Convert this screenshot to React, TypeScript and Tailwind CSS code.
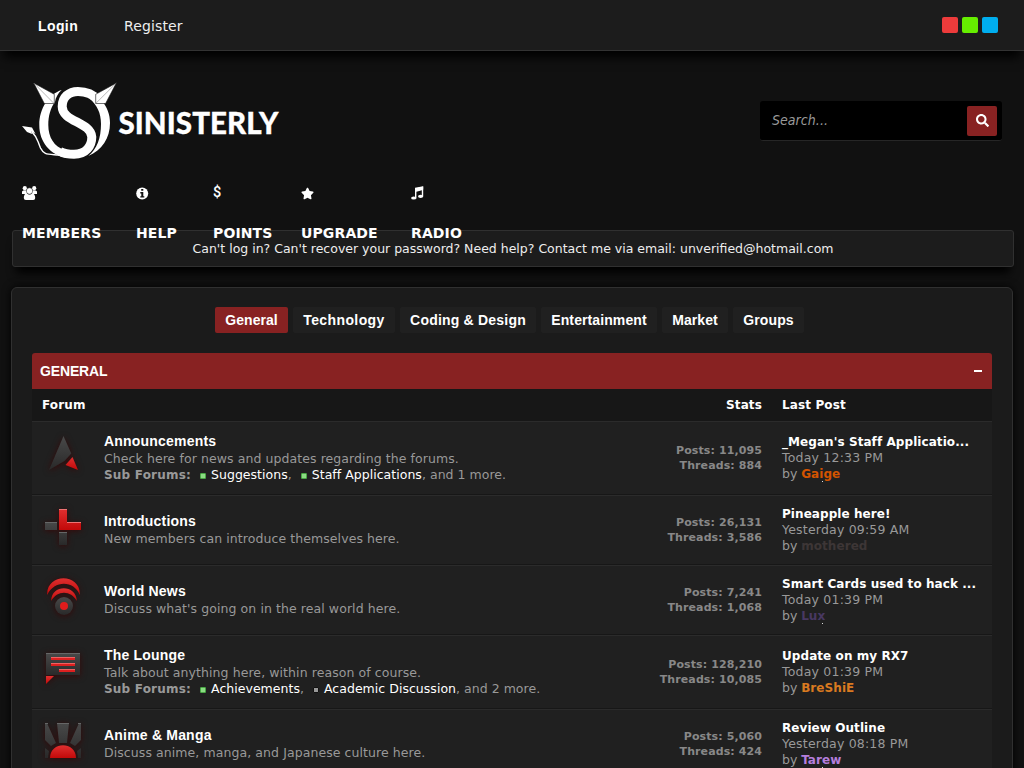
import React from "react";
import { FaSearch, FaStar } from "react-icons/fa";

const tabs = [
  { label: "General", w: "w-[73px]", track: "tracking-[0.05px]" },
  { label: "Technology", w: "w-[102px]", track: "tracking-[0.4px]" },
  { label: "Coding & Design", w: "w-[136px]", track: "tracking-[0.2px]" },
  { label: "Entertainment", w: "w-[116px]", track: "tracking-[0.1px]" },
  { label: "Market", w: "w-[66px]", track: "tracking-[0.1px]" },
  { label: "Groups", w: "w-[71px]", track: "tracking-[0.1px]" },
];

function Logo() {
  return (
    <svg width="260" height="80" viewBox="0 0 260 80" role="img" aria-label="Sinisterly">
      <path d="M38 71.5C43 74 47 74.3 52 74.3C64 74.3 69.8 66 69.8 57C69 42 40.2 42 40.2 26.5C40.2 17 47 11.4 56 11.4C64 11.4 71 14 76 20" fill="none" stroke="#fff" strokeWidth="9" />
      <g fill="#fff">
        <path d="M17.3 45C17.3 28 27 14 39.7 10C36 13 33.5 18 33 22C28.5 28 26.3 36 26.3 45C26.3 57 32 67 43 69.8L45 78C28 75 17.3 62 17.3 45Z" />
        <path d="M70 17L80 21C85 27 88 34 88 43C88 58 80 70 66.3 76C75 69 79 58 79 44C79 33 75 25 68 19Z" />
      </g>
      <path d="M37 75C25 74 22 75 18.5 68C15 60 16 58 10 52" fill="none" stroke="#fff" strokeWidth="1.5" />
      <path d="M0 46L10 47.5L13.5 54L9.5 51.5L10 54L5 52Z" fill="#fff" />
      <g fill="#fff" stroke="#111" strokeWidth=".6">
        <path d="M11.7 3L32.3 14.3V23.5H22.3Z" />
        <path d="M94.3 3L73.7 14.3V23.5H83.6Z" />
        <path d="M11.7 3L32 23.5M94.3 3L73.7 23.5" stroke="#888" />
      </g>
      <text x="96.5" y="54.3" fill="#fff" stroke="#fff" strokeWidth=".3" fontSize="29.5" fontWeight="900" fontFamily="Lato, sans-serif" textLength="160" lengthAdjust="spacingAndGlyphs">SINISTERLY</text>
    </svg>
  );
}

function UsersIcon() {
  return (
    <svg width="16" height="14" viewBox="0 0 16 14" fill="#fff">
      <circle cx="2.8" cy="2.2" r="2.1" />
      <circle cx="12.2" cy="2.2" r="2.1" />
      <path d="M0 8V5.5Q1 3.8 5 4.4V8ZM15 8V5.5Q14 3.8 10 4.4V8Z" />
      <path d="M3.8 14Q1.8 14 1.8 12Q1.8 7.6 4.7 7.4Q7.5 9.5 10.3 7.4Q13.2 7.6 13.2 12Q13.2 14 11.2 14Z" />
      <circle cx="7.5" cy="5" r="3.2" stroke="#111" strokeWidth=".5" />
    </svg>
  );
}

function InfoIcon() {
  return (
    <svg width="13" height="13" viewBox="0 0 13 13">
      <circle cx="6.2" cy="6.5" r="6" fill="#fff" />
      <path d="M5.2 2H7.3V3.8H5.2ZM4.3 5H7.3V9.2H8.3V10.6H4.3V9.2H5.3V6.4H4.3Z" fill="#111" />
    </svg>
  );
}

function MusicIcon() {
  return (
    <svg width="13" height="14" viewBox="0 0 13 14" fill="#fff">
      <path d="M4 2.6L12.2 .5V10.5H10.8V4.3L5.4 5.7V12.5H4Z" />
      <path d="M4 1.8L12.2 .2V3.4L4 5.3Z" />
      <ellipse cx="2.7" cy="12" rx="2.6" ry="1.6" />
      <ellipse cx="9.6" cy="10.3" rx="2.6" ry="1.6" />
    </svg>
  );
}

const nav = [
  { label: "MEMBERS", w: "w-[114px]", icon: <UsersIcon /> },
  { label: "HELP", w: "w-[77px]", icon: <InfoIcon /> },
  { label: "POINTS", w: "w-[88px]", icon: <span className="font-['Roboto'] text-[14.5px] leading-[14px] font-medium">$</span> },
  { label: "UPGRADE", w: "w-[110px]", icon: <FaStar size={13} /> },
  { label: "RADIO", w: "w-[60px]", icon: <MusicIcon /> },
];

function ForumIcon({ kind }: { kind: string }) {
  return (
    <svg width="44" height="48" viewBox="0 0 44 48" className="drop-shadow-[0_1px_3px_#350808]">
      <defs>
        <linearGradient id={"d" + kind} x1="0" y1="0" x2="0" y2="1">
          <stop stopColor="#494949" />
          <stop offset="1" stopColor="#292929" />
        </linearGradient>
        <linearGradient id={"r" + kind} x1="0" y1="0" x2="0" y2="1">
          <stop stopColor="#df3030" />
          <stop offset="1" stopColor="#c20909" />
        </linearGradient>
      </defs>
      {kind === "arrow" && (
        <>
          <path d="M21.5 4L29.3 21.5L22.5 29L7 38Z" fill="url(#darrow)" />
          <path d="M30.5 25L36 38L23.5 33Z" fill="url(#rarrow)" />
        </>
      )}
      {kind === "plus" && (
        <>
          <path d="M3 16H15V24H3ZM17 26H25V39H17Z" fill="url(#dplus)" />
          <path d="M17 3H25V16H39V24H17Z" fill="url(#rplus)" />
          <path d="M17 3.5H25M25 16.5H39" stroke="#ee7474" />
          <path d="M3 16.5H15M17 26.5H25" stroke="#666" />
        </>
      )}
      {kind === "news" && (
        <>
          <path d="M5.2 19C4 -3.5 39 -3.5 37.8 19C32 4 12 4 5.2 19Z" fill="url(#rnews)" />
          <path d="M9.2 25C9 8 34.5 8 34.8 25C29 14 15 14 9.2 25Z" fill="url(#rnews)" />
          <circle cx="22" cy="30" r="9" fill="url(#dnews)" />
          <circle cx="22" cy="30" r="4" fill="#e01c1c" />
        </>
      )}
      {kind === "chat" && (
        <>
          <path d="M4 7H38V29H4Z" fill="url(#dchat)" />
          <path d="M4 7.5H38" stroke="#666" />
          <path d="M9 12.5H33M9 18.5H33M17 24.5H33" stroke="#dc2020" strokeWidth="3" />
          <path d="M9 11.5H33M9 17.5H33M17 23.5H33" stroke="#ed6262" />
          <path d="M4 30H12L4 38Z" fill="url(#rchat)" />
        </>
      )}
      {kind === "sun" && (
        <>
          <path d="M3 3H5L14 23L9 26L3 20ZM15 3H27L25 23H17ZM37 3H39V20L33 26L28 23ZM3 28L7 31L6 38H3ZM39 28L35 31L36 38H39Z" fill="url(#dsun)" />
          <path d="M3 3.5H6M15 3.5H27M36 3.5H39" stroke="#666" />
          <path d="M8 38C8 21 34 21 34 38Z" fill="url(#rsun)" />
        </>
      )}
    </svg>
  );
}

interface Forum {
  kind: string;
  title: string;
  desc: string;
  subs?: { name: string; on: boolean }[];
  more?: string;
  posts: string;
  threads: string;
  last: string;
  time: string;
  user: string;
  color: string;
  sparkle?: boolean;
}

const forums: Forum[] = [
  { kind: "arrow", title: "Announcements", desc: "Check here for news and updates regarding the forums.", subs: [{ name: "Suggestions", on: true }, { name: "Staff Applications", on: true }], more: "and 1 more.", posts: "11,095", threads: "884", last: "_Megan's Staff Applicatio...", time: "Today 12:33 PM", user: "Gaige", color: "text-[#d35400]", sparkle: true },
  { kind: "plus", title: "Introductions", desc: "New members can introduce themselves here.", posts: "26,131", threads: "3,586", last: "Pineapple here!", time: "Yesterday 09:59 AM", user: "mothered", color: "text-[#3d3636]" },
  { kind: "news", title: "World News", desc: "Discuss what's going on in the real world here.", posts: "7,241", threads: "1,068", last: "Smart Cards used to hack ...", time: "Today 01:39 PM", user: "Lux", color: "text-[#483862]", sparkle: true },
  { kind: "chat", title: "The Lounge", desc: "Talk about anything here, within reason of course.", subs: [{ name: "Achievements", on: true }, { name: "Academic Discussion", on: false }], more: "and 2 more.", posts: "128,210", threads: "10,085", last: "Update on my RX7", time: "Today 01:39 PM", user: "BreShiE", color: "text-[#d97a20]" },
  { kind: "sun", title: "Anime & Manga", desc: "Discuss anime, manga, and Japanese culture here.", posts: "5,060", threads: "424", last: "Review Outline", time: "Yesterday 08:18 PM", user: "Tarew", color: "text-[#b57edc]", sparkle: true },
];

function Row({ f }: { f: Forum }) {
  return (
    <div className={`flex shrink-0 items-center border-t border-b border-t-[#2b2b2b] border-b-[#171717] bg-[#202020] ${f.subs ? "h-[74px]" : "h-[70px]"}`}>
      <div className="flex w-[72px] justify-start self-start pt-[10px] pl-[10px]">
        <ForumIcon kind={f.kind} />
      </div>
      <div className="flex-1">
        <div className="-mt-px mb-px font-['Liberation_Sans'] text-[14px] leading-4 font-bold tracking-[0.2px] text-white">{f.title}</div>
        <div className="-mb-px pt-px">{f.desc}</div>
        {f.subs && (
          <div className="-mb-px flex pt-px tracking-[0.03px] whitespace-pre">
            <b className="text-[12px] tracking-[0.2px]">Sub Forums:</b>
            {f.subs.map((s) => (
              <span key={s.name} className="flex items-center">
                <i className={`mt-[2px] mr-[5px] ml-[9px] size-[6px] rounded-[1px] border ${s.on ? "border-[#49a944] bg-[#8bdb83]" : "border-[#111] bg-[#999]"}`} />
                <span className="text-white">{s.name}</span>,
              </span>
            ))}
            <span> {f.more}</span>
          </div>
        )}
      </div>
      <div className="w-[120px] text-right text-[11px] leading-[15px] font-bold tracking-[0.1px] text-[#888]">
        <div>Posts: {f.posts}</div>
        <div>Threads: {f.threads}</div>
      </div>
      <div className="ml-5 w-[210px] whitespace-nowrap">
        <div className="text-[12px] font-bold tracking-[0.07px] text-white">{f.last}</div>
        <div className="tracking-[0.2px]">{f.time}</div>
        <div className="tracking-[-0.05px]">
          by <b className={`relative text-[12px] tracking-[0.07px] ${f.color}`}>{f.user}
            {f.sparkle && <i className="absolute bottom-[-1px] left-[21px] size-px bg-[#ddd]" />}
          </b>
        </div>
      </div>
    </div>
  );
}

export default function App() {
  return (
    <div className="flex h-[768px] w-[1024px] flex-col overflow-hidden bg-[#111] font-['DejaVu_Sans',sans-serif] text-[12.5px] leading-4 tracking-[0.08px] text-[#999]">
      <header className="flex h-[51px] shrink-0 items-center border-b border-[#333] bg-[#1c1c1c] pt-px pr-[26px] pl-[38px] text-[14px] tracking-[0.12px] text-[#eee] shadow-[0_10px_10px_-4px_#000]">
        <b className="w-[86px] font-['Liberation_Sans'] tracking-[0.4px] text-white">Login</b>
        <span>Register</span>
        <div className="-mt-px ml-auto flex gap-1">
          <i className="size-4 rounded-[2px] bg-[#ed3b3b]" />
          <i className="size-4 rounded-[2px] bg-[#66ee00]" />
          <i className="size-4 rounded-[2px] bg-[#00aeef]" />
        </div>
      </header>
      <div className="flex h-[130px] shrink-0 items-start justify-between pt-[29px] pr-[22px] pl-[22px]">
        <Logo />
        <div className="mt-[21px] flex h-10 w-[242px] items-center justify-between rounded-[3px] border-b border-[#262626] bg-black pr-[5px] pl-3">
          <span className="-mt-0.5 font-['DejaVu_Sans_Condensed','DejaVu_Sans'] text-[14px] tracking-[0.05px] text-[#999] italic">Search...</span>
          <button className="flex size-[30px] items-center justify-center rounded-[2px] bg-[#882222] text-white">
            <FaSearch size={13} />
          </button>
        </div>
      </div>
      <nav className="relative z-10 -mb-[11px] flex h-[60px] shrink-0 pl-[22px] text-[14px] font-bold tracking-[0.12px] text-white">
        {nav.map((n) => (
          <div key={n.label} className={`flex shrink-0 flex-col ${n.w}`}>
            <div className="flex h-6 items-center">{n.icon}</div>
            <div className="mt-5 leading-4">{n.label}</div>
          </div>
        ))}
      </nav>
      <div className="mr-[10px] ml-3 flex h-[37px] shrink-0 items-center justify-center rounded-[3px] border border-[#303030] bg-[#1c1c1c] tracking-normal text-[#eee] shadow-[0_10px_10px_-4px_#000]">
        Can't log in? Can't recover your password? Need help? Contact me via email: unverified@hotmail.com
      </div>
      <main className="mt-5 mr-[11px] ml-[11px] flex h-[520px] shrink-0 flex-col rounded-[6px] border border-[#303030] bg-[#1b1b1b] px-5 pt-[19px] shadow-[0_0_8px_#000]">
        <div className="ml-[183px] flex h-[26px] shrink-0 gap-[5px] font-['Liberation_Sans'] text-[14px] font-bold text-white">
          {tabs.map((t, i) => (
            <span key={t.label} className={`flex shrink-0 items-center justify-center rounded-[2px] whitespace-nowrap ${t.w} ${t.track} ${i === 0 ? "bg-[#882222]" : "bg-[#202020]"}`}>
              {t.label}
            </span>
          ))}
        </div>
        <section className="mt-5 flex flex-col">
          <div className="flex h-9 shrink-0 items-center justify-between rounded-t-[3px] bg-[#882222] pr-[10px] pl-2 font-['Liberation_Sans'] text-[14px] font-bold tracking-[-0.15px] text-white">
            GENERAL
            <i className="h-[2px] w-2 bg-white" />
          </div>
          <div className="flex h-8 shrink-0 items-center bg-[#171717] pl-[10px] text-[12px] font-bold tracking-[0.12px] text-white">
            <span className="flex-1">Forum</span>
            <span>Stats</span>
            <span className="ml-5 w-[210px]">Last Post</span>
          </div>
          {forums.map((f) => (
            <Row key={f.title} f={f} />
          ))}
        </section>
      </main>
    </div>
  );
}
